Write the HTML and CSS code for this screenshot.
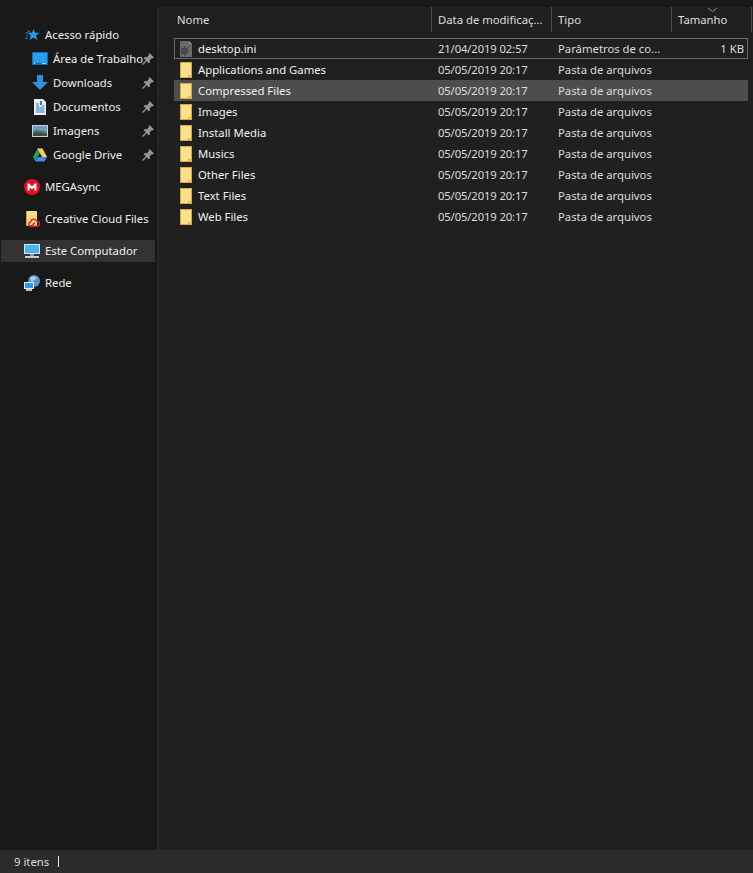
FILE: index.html
```html
<!DOCTYPE html>
<html lang="pt-BR">
<head>
  <meta charset="UTF-8">
  <title>Explorador de Arquivos</title>
  <link rel="stylesheet" href="styles.css">
</head>
<body>
  <div class="window">
    <div class="content">
      <nav class="sidebar">
        <div class="nav-group">
          <div class="nav-item">
            <svg class="nav-icon" viewBox="0 0 16 16"><path d="M9.500 2l1.500 3.800h4.500l-3.500 2.700 1.400 4.500-3.900-2.600-4 2.600 1.300-4.500-3.300-2.700h4.500z" fill="#2a9bec"/><path d="M3 3.500l3 1.500M1 6h3M2 9l2-.5M1 12l3-1.500" stroke="#1f7fc8" stroke-width="1"/></svg>
            <span>Acesso rápido</span>
          </div>
          <div class="nav-item sub">
            <svg class="nav-icon" viewBox="0 0 16 16"><rect x="0" y="1" width="16" height="13" fill="#0f6fc0"/><rect x="1" y="2" width="14" height="11" fill="#2a9cf0"/><rect x="1" y="12" width="14" height="1" fill="#0f6fc0"/><rect x="2" y="12" width="1" height="1" fill="#d8eefc"/><rect x="10" y="12" width="4" height="1" fill="#9fd4fa"/></svg>
            <span>Área de Trabalho</span>
            <svg class="pin" viewBox="0 0 12 12"><use href="#pin"/></svg>
          </div>
          <div class="nav-item sub">
            <svg class="nav-icon" viewBox="0 0 16 16"><path d="M5 0h6v7h5l-8 8-8-8h5z" fill="#3292e0"/></svg>
            <span>Downloads</span>
            <svg class="pin" viewBox="0 0 12 12"><use href="#pin"/></svg>
          </div>
          <div class="nav-item sub">
            <svg class="nav-icon" viewBox="0 0 16 16"><path d="M2 0h9l3 3v13H2z" fill="#e8eef2"/><path d="M4 5h3M4 7h3M9.500 7h3M4 9h8.500M4 11h8.500M4 13h8.500" stroke="#2f7fc7" stroke-width="1"/><path d="M8 2h2v4H8z" fill="#2f7fc7"/></svg>
            <span>Documentos</span>
            <svg class="pin" viewBox="0 0 12 12"><use href="#pin"/></svg>
          </div>
          <div class="nav-item sub">
            <svg class="nav-icon" viewBox="0 0 16 16"><rect x="0" y="2" width="16" height="12" fill="#d0d0d0"/><rect x="1" y="3" width="14" height="10" fill="#6d9fc4"/><path d="M1 8c4-2 8-1 14 1v4H1z" fill="#4f7a68"/><path d="M1 10c5-1 9 0 14 1v2H1z" fill="#33524a"/></svg>
            <span>Imagens</span>
            <svg class="pin" viewBox="0 0 12 12"><use href="#pin"/></svg>
          </div>
          <div class="nav-item sub">
            <svg class="nav-icon" viewBox="0 0 16 16"><path d="M5.500 1.500h5L5.500 10 3.500 14.500 1 10z" fill="#1fa463"/><path d="M10.500 1.500L15 10h-5L5.500 1.500z" fill="#ffd04b"/><path d="M3.500 14.500L6 10h9l-2.500 4.500z" fill="#4687f4"/></svg>
            <span>Google Drive</span>
            <svg class="pin" viewBox="0 0 12 12"><use href="#pin"/></svg>
          </div>
        </div>
        <div class="nav-group">
          <div class="nav-item">
            <svg class="nav-icon" viewBox="0 0 16 16"><circle cx="8" cy="8" r="8" fill="#e3101e"/><path d="M3.500 11.500v-7h1.700L8 7.500l2.800-3h1.700v7h-2.200V8.300L8 10.600 5.700 8.300v3.200z" fill="#fff"/></svg>
            <span>MEGAsync</span>
          </div>
        </div>
        <div class="nav-group">
          <div class="nav-item">
            <svg class="nav-icon" viewBox="0 0 16 16"><path d="M2 0h11v15H2z" fill="#f7dc85"/><path d="M2 0h1v15H2zM2 14h11v1H2z" fill="#c9a240"/><path d="M7 15.500a2.300 2.300 0 0 1-.5-4.500 3.200 3.200 0 0 1 6-1 2.800 2.800 0 0 1 .8 5.500zM7 15.500l4-4" fill="none" stroke="#d8251d" stroke-width="1.500"/></svg>
            <span>Creative Cloud Files</span>
          </div>
        </div>
        <div class="nav-group">
          <div class="nav-item active">
            <svg class="nav-icon" viewBox="0 0 16 16"><rect x="0" y="1" width="16" height="10" fill="#cfe6f5"/><rect x="1" y="2" width="14" height="8" fill="#4db4f2"/><rect x="6" y="11" width="4" height="2" fill="#8b9aa5"/><rect x="1" y="13" width="14" height="2" fill="#c4ced6"/></svg>
            <span>Este Computador</span>
          </div>
        </div>
        <div class="nav-group">
          <div class="nav-item">
            <svg class="nav-icon" viewBox="0 0 16 16"><circle cx="10" cy="6" r="6" fill="#5c92c4"/><path d="M6 3c2-2 5-2 7 0-1 2-3 1-4 3S7 6 6 3z" fill="#a9cde8"/><rect x="0" y="7" width="10" height="7" fill="#e3eef6"/><rect x="1" y="8" width="8" height="5" fill="#2f9be6"/><rect x="2" y="14" width="6" height="2" fill="#b8c4cc"/></svg>
            <span>Rede</span>
          </div>
        </div>
      </nav>
      <div class="splitter"></div>
      <main class="files">
        <div class="list-head">
          <div class="head-cell name">Nome</div>
          <div class="head-cell">Data de modificaç...</div>
          <div class="head-cell">Tipo</div>
          <div class="head-cell sorted">
            <svg class="sort-arrow" viewBox="0 0 9 4"><path d="M0 0l4.500 3.500L9 0" fill="none" stroke="#8a8a8a"/></svg>
            Tamanho
          </div>
        </div>
        <div class="rows">
          <div class="row focused">
            <div class="cell name">
              <svg class="file-icon" viewBox="0 0 16 16"><path d="M2 0h9l3 3v13H2z" fill="#6a6a6a"/><path d="M11 0l3 3h-3z" fill="#8c8c8c"/><circle cx="6.500" cy="10" r="3.500" fill="#484848"/><circle cx="6.500" cy="10" r="1.500" fill="#7a7a7a"/><path d="M6.500 5v10M1.500 10h10M3 6.500l7 7M10 6.500l-7 7" stroke="#484848" stroke-width="1"/></svg>
              desktop.ini
            </div>
            <div class="cell date">21/04/2019 02:57</div>
            <div class="cell">Parâmetros de co...</div>
            <div class="cell size">1 KB</div>
          </div>
          <div class="row">
            <div class="cell name"><svg class="file-icon" viewBox="0 0 16 16"><use href="#folder"/></svg>Applications and Games</div>
            <div class="cell date">05/05/2019 20:17</div>
            <div class="cell">Pasta de arquivos</div>
            <div class="cell size"></div>
          </div>
          <div class="row selected">
            <div class="cell name"><svg class="file-icon" viewBox="0 0 16 16"><use href="#folder"/></svg>Compressed Files</div>
            <div class="cell date">05/05/2019 20:17</div>
            <div class="cell">Pasta de arquivos</div>
            <div class="cell size"></div>
          </div>
          <div class="row">
            <div class="cell name"><svg class="file-icon" viewBox="0 0 16 16"><use href="#folder"/></svg>Images</div>
            <div class="cell date">05/05/2019 20:17</div>
            <div class="cell">Pasta de arquivos</div>
            <div class="cell size"></div>
          </div>
          <div class="row">
            <div class="cell name"><svg class="file-icon" viewBox="0 0 16 16"><use href="#folder"/></svg>Install Media</div>
            <div class="cell date">05/05/2019 20:17</div>
            <div class="cell">Pasta de arquivos</div>
            <div class="cell size"></div>
          </div>
          <div class="row">
            <div class="cell name"><svg class="file-icon" viewBox="0 0 16 16"><use href="#folder"/></svg>Musics</div>
            <div class="cell date">05/05/2019 20:17</div>
            <div class="cell">Pasta de arquivos</div>
            <div class="cell size"></div>
          </div>
          <div class="row">
            <div class="cell name"><svg class="file-icon" viewBox="0 0 16 16"><use href="#folder"/></svg>Other Files</div>
            <div class="cell date">05/05/2019 20:17</div>
            <div class="cell">Pasta de arquivos</div>
            <div class="cell size"></div>
          </div>
          <div class="row">
            <div class="cell name"><svg class="file-icon" viewBox="0 0 16 16"><use href="#folder"/></svg>Text Files</div>
            <div class="cell date">05/05/2019 20:17</div>
            <div class="cell">Pasta de arquivos</div>
            <div class="cell size"></div>
          </div>
          <div class="row">
            <div class="cell name"><svg class="file-icon" viewBox="0 0 16 16"><use href="#folder"/></svg>Web Files</div>
            <div class="cell date">05/05/2019 20:17</div>
            <div class="cell">Pasta de arquivos</div>
            <div class="cell size"></div>
          </div>
        </div>
      </main>
    </div>
    <footer class="statusbar">
      <span>9 itens</span>
      <span class="status-sep"></span>
    </footer>
  </div>

  <svg class="defs" width="0" height="0">
    <symbol id="folder" viewBox="0 0 16 16">
      <path d="M2 0h12v16H2z" fill="#d9a93f"/>
      <path d="M3 1h10v12h-3v2H3z" fill="#fbe08e"/>
      <path d="M10.500 13.500H13V15h-2.500z" fill="#f3cc68"/>
    </symbol>
    <symbol id="pin" viewBox="0 0 12 12">
      <path d="M7.500 0L12 4.500l-1 .8-1-.3-2.200 2.200.2 2.200-1 1-2.200-2.200L1 12l-1-1 3.800-3.800-2.200-2.200 1-1 2.200.2L7 2l-.3-1z" fill="#8e969b"/>
    </symbol>
  </svg>
</body>
</html>
```
FILE: styles.css
```css
* {
  box-sizing: border-box;
}
html, body {
  margin: 0;
  height: 100%;
  overflow: hidden;
}
body {
  background-color: #191919;
  color: #f0f0f0;
  font-family: "Noto Sans", "Open Sans", sans-serif;
  font-size: 11.3px;
}
.window {
  display: flex;
  flex-direction: column;
  height: 100%;
}
.content {
  flex: 1;
  display: flex;
  min-height: 0;
}
.statusbar {
  height: 23px;
  background-color: #2b2b2b;
  display: flex;
  align-items: center;
  padding-left: 14px;
  color: #dcdcdc;
}
.status-sep {
  width: 1px;
  height: 11px;
  background-color: #e6e6e6;
  margin-left: 9px;
}

/* left tree */
.sidebar {
  width: 157px;
  padding-top: 23px;
  padding-left: 1px;
  padding-right: 2px;
  background-color: #191919;
}
.nav-group {
  padding-bottom: 8px;
}
.nav-item {
  height: 24px;
  display: flex;
  align-items: center;
  padding-left: 23px;
  white-space: nowrap;
  position: relative;
}
.nav-item span {
  padding-bottom: 2px;
}
.nav-item.sub {
  padding-left: 31px;
}
.nav-item.active {
  background-color: #333333;
  height: 22px;
  margin: 1px 0;
}
.nav-icon {
  width: 16px;
  height: 16px;
  margin-right: 5px;
  flex-shrink: 0;
}
.pin {
  width: 12px;
  height: 12px;
  position: absolute;
  left: 141px;
  top: 6px;
}

.splitter {
  width: 2px;
  background-color: #262626;
  margin-top: 7px;
}

/* file list */
.files {
  flex: 1;
  margin-top: 7px;
  background-color: #202020;
  padding-left: 15px;
  overflow: hidden;
}
.list-head {
  display: grid;
  grid-template-columns: 258px 120px 120px 80px;
  height: 25px;
}
.head-cell {
  display: flex;
  align-items: center;
  padding-left: 6px;
  border-right: 1px solid #4a4a4a;
  color: #dedede;
  position: relative;
  white-space: nowrap;
}
.head-cell.name {
  padding-left: 3px;
}
.sort-arrow {
  position: absolute;
  left: 36px;
  top: 1px;
  width: 9px;
  height: 4px;
}
.rows {
  margin-top: 6px;
  width: 574px;
}
.row {
  display: grid;
  grid-template-columns: 258px 120px 120px 76px;
  height: 21px;
  align-items: center;
  color: #dcdcdc;
}
.row.focused {
  outline: 1px solid #6b6b6b;
  outline-offset: -1px;
}
.row.selected {
  background-color: #4d4d4d;
}
.cell {
  padding-left: 6px;
  white-space: nowrap;
}
.cell.date {
  letter-spacing: -0.15px;
}
.cell.name {
  display: flex;
  align-items: center;
  padding-left: 4px;
  color: #f0f0f0;
}
.cell.size {
  text-align: right;
  padding-right: 4px;
}
.file-icon {
  width: 16px;
  height: 16px;
  margin-right: 4px;
  flex-shrink: 0;
}
.defs {
  position: absolute;
}
```
